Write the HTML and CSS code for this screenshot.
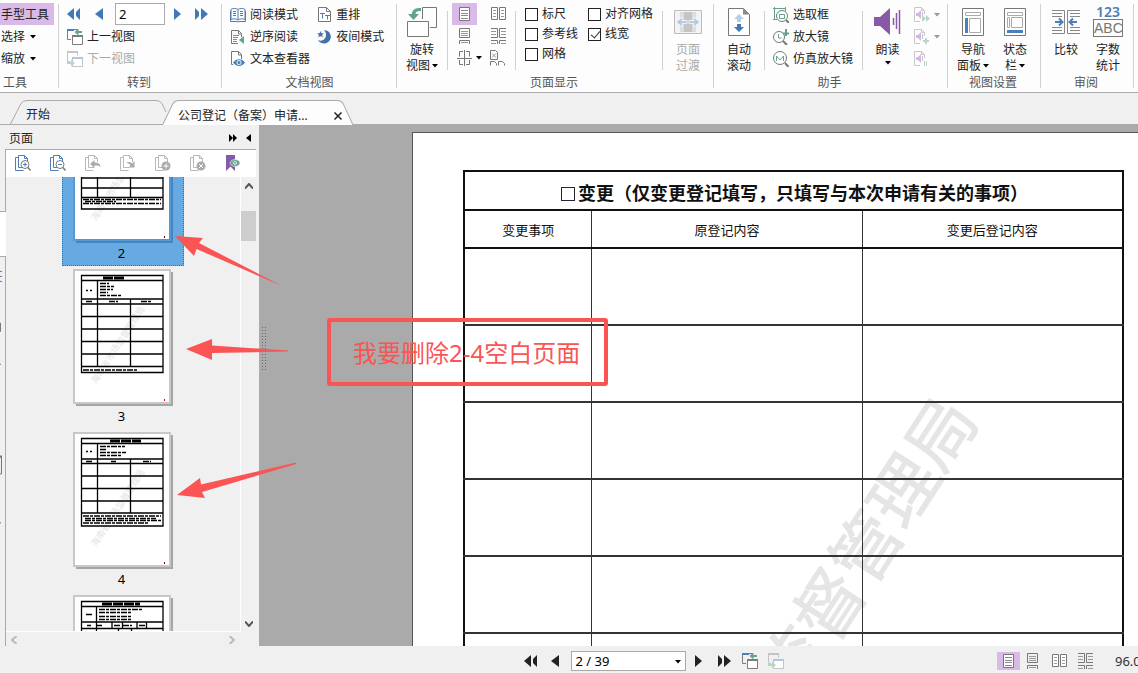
FILE: index.html
```html
<!DOCTYPE html>
<html lang="zh-CN">
<head>
<meta charset="utf-8">
<title>公司登记（备案）申请</title>
<link rel="stylesheet" href="styles.css">
</head>
<body>
<svg class="defs" aria-hidden="true">
  <symbol id="i-first" viewBox="0 0 14 12"><path d="M7 0v12L0 6zM9 4l4-4v12L9 8z" /></symbol>
  <symbol id="i-prev" viewBox="0 0 9 12"><path d="M8 0v12L0 6z" /></symbol>
  <symbol id="i-next" viewBox="0 0 9 12"><path d="M1 0v12l7-6z" /></symbol>
  <symbol id="i-last" viewBox="0 0 14 12"><path d="M1 0l4 4v4l-4 4zM7 0v12l7-6z" /></symbol>
  <symbol id="i-caret" viewBox="0 0 6 4"><path d="M0 0h6L3 3.500z" /></symbol>
  <symbol id="i-back" viewBox="0 0 16 16">
    <path d="M4 10.500H.5V.5h10M10.500 5V.5" fill="none" stroke="#7c7c7c"/><path d="M0 0h7v2H0z" fill="#4a7fb8"/>
    <path d="M5.500 6.500h10v9h-10z" fill="#fff" stroke="#7c7c7c"/><path d="M5 6h11v2H5z" fill="#7c7c7c"/>
    <path d="M7.500 3l4-3.500v2.500H15v2h-3.500v2.500z" fill="#62a389"/>
  </symbol>
  <symbol id="i-fwd" viewBox="0 0 16 16">
    <path d="M3 10.500H.5V.5h10v4" fill="none" stroke="#c4c4c4"/><path d="M0 0h11v2H0z" fill="#c4c4c4"/>
    <path d="M5.500 6.500h10v9h-10z" fill="#fff" stroke="#c4c4c4"/><path d="M5 6h11v2H5z" fill="#afc6de"/>
    <path d="M8 12l-4-3.500V11H0v2h4v2.500z" fill="#b5d5c8"/>
  </symbol>
  <symbol id="i-book" viewBox="0 0 16 16">
    <path d="M1 2.500C3 1 6 1 8 2.500C10 1 13 1 15 2.500V12.500C13 11.500 10 11.500 8 13C6 11.500 3 11.500 1 12.500zM8 2.500V13M.5 4v10.500h6.500l1 .5 1-.5h6.500V4" fill="none" stroke="#4a7fb8"/>
    <path d="M3 4.500h3M3 6.500h3M3 8.500h3M10 4.500h3M10 6.500h3M10 8.500h3" stroke="#777"/>
  </symbol>
  <symbol id="i-reverse" viewBox="0 0 16 16">
    <path d="M8 14.500H1.500V1.500h7l3 3V8M8.500 1.500v3.500h3" fill="none" stroke="#777"/>
    <path d="M3 6.500h6M3 8.500h5M3 10.500h4M3 12.500h4" stroke="#888"/><path d="M14 7v8l-5-4z" fill="#62a389"/>
  </symbol>
  <symbol id="i-viewer" viewBox="0 0 16 16">
    <path d="M3 13.500H1.500V.5h7l3 3V8M8.500.5v3.500h3" fill="none" stroke="#777"/>
    <path d="M3 11.500C6 7 12 7 15 11.500C12 16 6 16 3 11.500z" fill="#4a7fb8"/><circle cx="9" cy="11.500" r="2.500" fill="#dce8f4"/><circle cx="9" cy="11.500" r="1.500" fill="#4a7fb8"/>
  </symbol>
  <symbol id="i-reflow" viewBox="0 0 16 16">
    <path d="M1.500.5h8l4 4v10h-12zM9.500.5v4h4" fill="none" stroke="#777"/>
    <path d="M3 6.500h5M5.500 6.500v5M8 8.500h5M10.500 8.500v4" stroke="#4a7fb8" fill="none"/>
  </symbol>
  <symbol id="i-moon" viewBox="0 0 16 16">
    <path d="M7 1a6.800 6.800 0 1 1-6 10c4 2 8-1 8-5 0-2-.8-4-2-5z" fill="#4670a8"/><path d="M3.500 2l1 2.300 2.500.2-2 1.500.8 2.500L3.500 7l-2.300 1.500L2 6 0 4.500l2.500-.2z" fill="#4670a8"/>
  </symbol>
  <symbol id="i-single" viewBox="0 0 16 16"><path d="M2.500 1.500h10v13h-10z" fill="#fff" stroke="#777"/><path d="M4 4.500h7M4 7.500h7M4 9.500h7M4 12.500h7" stroke="#888"/></symbol>
  <symbol id="i-cont" viewBox="0 0 16 16"><path d="M2.500.5h10v9h-10zM2.500 16v-3.500h10V16" fill="none" stroke="#777"/><path d="M4 3.500h7M4 5.500h7M4 7.500h7M4 14.500h7" stroke="#999"/></symbol>
  <symbol id="i-facing" viewBox="0 0 16 16"><path d="M1.500 1.500h6v12h-6zM9.500 1.500h6v12h-6z" fill="#fff" stroke="#777"/><path d="M3 4.500h3M3 7.500h3M3 10.500h3M11 4.500h3M11 7.500h3M11 10.500h3" stroke="#999"/></symbol>
  <symbol id="i-contfacing" viewBox="0 0 16 16"><path d="M1 .5h6.500v9H1M16 .5H9.500v9H16M1 12.500h6.500V16M16 12.500H9.500V16" fill="none" stroke="#777"/><path d="M1 3.500h5M1 6.500h5M11 3.500h5M11 6.500h5M1 15.500h5M11 15.500h5" stroke="#999"/></symbol>
  <symbol id="i-split" viewBox="0 0 16 16"><path d="M6 1.500H2.500v5M2.500 10v4.500H6M9 1.500h3.500v5M12.500 10v4.500H9M7.500 0v16M0 8.500h15" fill="none" stroke="#777"/></symbol>
  <symbol id="i-cover" viewBox="0 0 16 16"><path d="M.5.500h5l2 2v7h-7zM.5 15.500v-4h4l2 2v2M8.500 15.500v-4h4l2 2v2" fill="none" stroke="#777"/><path d="M2 3.500l4 4M6 3.500l-4 4" stroke="#999"/></symbol>
  <symbol id="i-rotate" viewBox="0 0 30 30"><path d="M15.500 12V.5h14v20H23" fill="none" stroke="#777"/><path d="M.5 14.500h21v15H.5z" fill="#fff" stroke="#777"/><path d="M1 7h4C5 2 9 1 14 1v3c-3 0-5 0-5.500 3H12l-5.500 6z" fill="#62a389"/></symbol>
  <symbol id="i-trans" viewBox="0 0 28 24"><path d="M.5.500h27v23H.5z" fill="#f3f3f3" stroke="#bdbdbd"/><path d="M6 2h16v20H6z" fill="#ddd"/><path d="M10 2h8v20h-8z" fill="#c5c5c5"/><path d="M2 12l6-5v3.500h5v3H8V17zM26 12l-6-5v3.500h-5v3h5V17z" fill="#b3cbe6" stroke="#fff" stroke-width=".7"/></symbol>
  <symbol id="i-scroll" viewBox="0 0 22 28"><path d="M.5.500h15l6 6v21H.5z" fill="#fff" stroke="#777"/><path d="M15 .5v6h6.500" fill="#888"/><path d="M11 6l5 5h-3v3H9v-3H6z" fill="#b5cee8"/><path d="M11 24l5-5h-3v-3H9v3H6z" fill="#4078b8"/></symbol>
  <symbol id="i-marquee" viewBox="0 0 16 16"><path d="M0 1.500h12M12.500 0v4M1.500 0v12M0 12.500h4" stroke="#62a389" fill="none"/><circle cx="9" cy="9" r="5.500" fill="#fff" stroke="#777"/><path d="M6.500 11.500v-4h5v4z" fill="none" stroke="#62a389"/><path d="M13 13l3 3" stroke="#777" stroke-width="2"/></symbol>
  <symbol id="i-loupe" viewBox="0 0 16 16"><circle cx="6" cy="8" r="5.500" fill="#fff" stroke="#777"/><path d="M5.500 5v4h3" stroke="#62a389" fill="none"/><path d="M10 12l4 4" stroke="#777" stroke-width="2"/><path d="M13 0v7M10 4.500h6" stroke="#62a389" stroke-width="2"/></symbol>
  <symbol id="i-magnify" viewBox="0 0 16 16"><circle cx="7" cy="7" r="6.500" fill="#fff" stroke="#777"/><path d="M3.500 10V5l3.500 4 3.500-4v5" stroke="#62a389" fill="none"/><path d="M12 12l3.500 4" stroke="#777" stroke-width="2"/></symbol>
  <symbol id="i-read" viewBox="0 0 27 28"><path d="M0 9h6l10-9v27L6 18H0z" fill="#8859a7"/><path d="M19.500 10v7M22.500 5v16M25.500 2v24" stroke="#8859a7" stroke-width="1.500"/></symbol>
  <symbol id="i-vol" viewBox="0 0 16 16"><path d="M6 14.500H.5V.5h7l3 3V7M7.500.5v3h3" fill="none" stroke="#c8c8c8"/><path d="M2 6h2l3-3v9L4 9H2z" fill="#d0b9de"/><path d="M8.500 5v5" stroke="#d0b9de"/></symbol>
  <symbol id="i-nav" viewBox="0 0 22 28"><path d="M.5.500h21v27H.5z" fill="#fff" stroke="#777"/><path d="M3.500 4.500h15v3h-15zM7.500 10.500h11v14h-11z" fill="none" stroke="#aaa"/><path d="M3 10h3v15H3z" fill="#4a7fb8"/></symbol>
  <symbol id="i-statusbar" viewBox="0 0 22 28"><path d="M.5.500h21v27H.5z" fill="#fff" stroke="#777"/><path d="M3.500 4.500h15v3h-15zM3.500 9.500h2v10h-2zM7.500 9.500h11v10h-11z" fill="none" stroke="#aaa"/><path d="M3 22h16v3H3z" fill="#4a7fb8"/></symbol>
  <symbol id="i-compare" viewBox="0 0 28 28"><path d="M0 2.500h12.500v23H0M28 2.500H15.500v23H28M0 5.500h10M0 8.500h10M0 19.500h10M0 22.500h10M18 5.500h10M18 8.500h10M18 19.500h10M18 22.500h10" fill="none" stroke="#888"/><path d="M3 14h7M7 10.500l3.500 3.500L7 17.500M25 14h-7M21 10.500L17.500 14l3.500 3.500" fill="none" stroke="#4a7fb8" stroke-width="2"/></symbol>
  <symbol id="i-pages" viewBox="0 0 16 16"><path d="M3.500 2.500h-3v13h8M9 12.500H3.500V.5h6l3 3V7M9.500.5v3h3" fill="none" stroke="currentColor"/></symbol>
  <symbol id="i-zoomin" viewBox="0 0 16 16"><use href="#i-pages" color="#4a7fb8"/><circle cx="10" cy="9.500" r="4" fill="#fff" stroke="#777"/><path d="M8 9.500h4M10 7.500v4" stroke="#4a7fb8"/><path d="M13 12.500l2.500 3" stroke="#777" stroke-width="1.500"/></symbol>
  <symbol id="i-zoomout" viewBox="0 0 16 16"><use href="#i-pages" color="#4a7fb8"/><circle cx="10" cy="9.500" r="4" fill="#fff" stroke="#777"/><path d="M8 9.500h4" stroke="#4a7fb8"/><path d="M13 12.500l2.500 3" stroke="#777" stroke-width="1.500"/></symbol>
  <symbol id="i-rotl" viewBox="0 0 16 16"><use href="#i-pages" color="#b8b8b8"/><path d="M5 9l4.500-4v2.500c3.500 0 6 1 6 5-1-2-3-2-6-2V13z" fill="#aaa"/></symbol>
  <symbol id="i-rotr" viewBox="0 0 16 16"><use href="#i-pages" color="#b8b8b8"/><path d="M6 7.500c3-1 5-.5 6 1L14.500 6v6.500H8l2.500-2c-1-2-3-2.500-4.500-3z" fill="#aaa"/></symbol>
  <symbol id="i-padd" viewBox="0 0 16 16"><use href="#i-pages" color="#b8b8b8"/><circle cx="11" cy="11" r="4.500" fill="#aaa"/><path d="M8.500 11h5M11 8.500v5" stroke="#fff"/></symbol>
  <symbol id="i-pdel" viewBox="0 0 16 16"><use href="#i-pages" color="#b8b8b8"/><circle cx="11" cy="11" r="4.500" fill="#aaa"/><path d="M9 9l4 4M13 9l-4 4" stroke="#fff"/></symbol>
  <symbol id="i-mark" viewBox="0 0 16 16"><path d="M1 0h9v16l-4.500-4.500L1 16z" fill="#8859a7"/><ellipse cx="10" cy="8" rx="5" ry="3.500" fill="#72a690" stroke="#fff" stroke-width=".5"/><circle cx="10" cy="8" r="1.500" fill="none" stroke="#d8eae2"/></symbol>
  <symbol id="i-more" viewBox="0 0 8 8"><path d="M0 0l4 4-4 4zM4 0l4 4-4 4z"/></symbol>
  <symbol id="i-up" viewBox="0 0 8 6"><path d="M0 5.500L4 1l4 4.500" fill="none" stroke="currentColor" stroke-width="2"/></symbol>
</svg>

<header class="ribbon">
  <section class="group group-tools">
    <div class="group-body"><div class="stack">
      <button class="cmd on">手型工具</button>
      <button class="cmd">选择<svg class="caret"><use href="#i-caret"/></svg></button>
      <button class="cmd">缩放<svg class="caret"><use href="#i-caret"/></svg></button>
    </div></div>
    <h2>工具</h2>
  </section>
  <section class="group group-goto">
    <div class="group-body"><div class="stack">
      <div class="nav-row">
        <button class="nav" aria-label="首页"><svg class="w14"><use href="#i-first"/></svg></button>
        <button class="nav" aria-label="上一页"><svg class="w9"><use href="#i-prev"/></svg></button>
        <input class="page-input" type="text" value="2" aria-label="页码">
        <button class="nav" aria-label="下一页"><svg class="w9"><use href="#i-next"/></svg></button>
        <button class="nav" aria-label="末页"><svg class="w14"><use href="#i-last"/></svg></button>
      </div>
      <button class="cmd"><svg class="ic"><use href="#i-back"/></svg>上一视图</button>
      <button class="cmd off" disabled><svg class="ic"><use href="#i-fwd"/></svg>下一视图</button>
    </div></div>
    <h2>转到</h2>
  </section>
  <section class="group group-doc">
    <div class="group-body">
      <div class="stack">
        <button class="cmd"><svg class="ic"><use href="#i-book"/></svg>阅读模式</button>
        <button class="cmd"><svg class="ic"><use href="#i-reverse"/></svg>逆序阅读</button>
        <button class="cmd"><svg class="ic"><use href="#i-viewer"/></svg>文本查看器</button>
      </div>
      <div class="stack">
        <button class="cmd"><svg class="ic"><use href="#i-reflow"/></svg>重排</button>
        <button class="cmd"><svg class="ic"><use href="#i-moon"/></svg>夜间模式</button>
      </div>
    </div>
    <h2>文档视图</h2>
  </section>
  <section class="group group-display">
    <div class="group-body">
      <button class="big"><svg class="s30"><use href="#i-rotate"/></svg><span>旋转</span><span>视图<svg class="caret"><use href="#i-caret"/></svg></span></button>
      <div class="layouts">
        <button class="lay on" aria-label="单页"><svg class="ic"><use href="#i-single"/></svg></button>
        <button class="lay" aria-label="双页"><svg class="ic"><use href="#i-facing"/></svg></button>
        <button class="lay" aria-label="连续"><svg class="ic"><use href="#i-cont"/></svg></button>
        <button class="lay" aria-label="连续双页"><svg class="ic"><use href="#i-contfacing"/></svg></button>
        <button class="lay lay-drop" aria-label="拆分"><svg class="ic"><use href="#i-split"/></svg><svg class="caret"><use href="#i-caret"/></svg></button>
        <button class="lay" aria-label="封面"><svg class="ic"><use href="#i-cover"/></svg></button>
      </div>
      <div class="checks">
        <label><input type="checkbox">标尺</label>
        <label><input type="checkbox">对齐网格</label>
        <label><input type="checkbox">参考线</label>
        <label><input type="checkbox" checked>线宽</label>
        <label><input type="checkbox">网格</label>
      </div>
      <button class="big off" disabled><svg class="s28x24"><use href="#i-trans"/></svg><span>页面</span><span>过渡</span></button>
    </div>
    <h2>页面显示</h2>
  </section>
  <section class="group group-assist">
    <div class="group-body">
      <button class="big"><svg class="s22"><use href="#i-scroll"/></svg><span>自动</span><span>滚动</span></button>
      <div class="stack ruled">
        <button class="cmd"><svg class="ic"><use href="#i-marquee"/></svg>选取框</button>
        <button class="cmd"><svg class="ic"><use href="#i-loupe"/></svg>放大镜</button>
        <button class="cmd"><svg class="ic"><use href="#i-magnify"/></svg>仿真放大镜</button>
      </div>
      <button class="big"><svg class="s27"><use href="#i-read"/></svg><span>朗读</span><svg class="caret low"><use href="#i-caret"/></svg></button>
      <div class="stack">
        <button class="cmd off" disabled aria-label="朗读快进"><svg class="ic" viewBox="0 0 16 16"><use href="#i-vol"/><path d="M8 8l4 3.500L8 15zM12 8l4 3.500-4 3.500z" fill="#b5d8c8"/></svg><svg class="caret"><use href="#i-caret"/></svg></button>
        <button class="cmd off" disabled aria-label="朗读增大"><svg class="ic" viewBox="0 0 16 16"><use href="#i-vol"/><path d="M12 9v6M9 12h6" stroke="#b5d8c8" stroke-width="2"/></svg><svg class="caret"><use href="#i-caret"/></svg></button>
        <button class="cmd off" disabled aria-label="朗读暂停"><svg class="ic" viewBox="0 0 16 16"><use href="#i-vol"/><path d="M10.500 10v5M12.500 10v5" stroke="#b5d8c8"/></svg></button>
      </div>
    </div>
    <h2>助手</h2>
  </section>
  <section class="group group-pair">
    <div class="group-body">
      <button class="big"><svg class="s22"><use href="#i-nav"/></svg><span>导航</span><span>面板<svg class="caret"><use href="#i-caret"/></svg></span></button>
      <button class="big"><svg class="s22"><use href="#i-statusbar"/></svg><span>状态</span><span>栏<svg class="caret"><use href="#i-caret"/></svg></span></button>
    </div>
    <h2>视图设置</h2>
  </section>
  <section class="group group-pair">
    <div class="group-body">
      <button class="big"><svg class="s28"><use href="#i-compare"/></svg><span>比较</span></button>
      <button class="big"><span class="count"><b>123</b><i>ABC</i></span><span>字数</span><span>统计</span></button>
    </div>
    <h2>审阅</h2>
  </section>
</header>

<nav class="tabs">
  <a class="tab tab-home" href="#"><svg class="tab-shape" viewBox="0 0 158 24" preserveAspectRatio="none"><path d="M.5 24L11 3.500Q13 .5 17 .5H146Q150 .5 152 3.500L156 12" fill="#f0f0f0" stroke="#aaa"/></svg><span>开始</span></a>
  <a class="tab tab-doc" href="#"><svg class="tab-shape" viewBox="0 0 194 24" preserveAspectRatio="none"><path d="M.5 24L11 3.500Q13 .5 17 .5H177Q181 .5 183 3.500L193 24" fill="#fdfdfd" stroke="#aaa"/></svg><span>公司登记（备案）申请...</span><svg class="close" viewBox="0 0 8 8"><path d="M.5.500l7 7M7.500.500l-7 7" stroke="#222" stroke-width="1.500"/></svg></a>
</nav>

<main class="work">
  <aside class="side">
    <div class="side-head"><h2>页面</h2>
      <button aria-label="展开"><svg class="s8"><use href="#i-more"/></svg></button>
      <button aria-label="折叠"><svg class="s8" viewBox="0 0 8 8"><path d="M6 0v8L1 4z"/></svg></button>
    </div>
    <div class="side-main">
      <div class="strip"><i class="seg a"></i><i class="seg b"></i><svg class="seg c" viewBox="0 0 6 390" preserveAspectRatio="xMinYMin slice"><path d="M0 14.500h2M0 19.500h2M0 24.500h2M0 107.500h1" stroke="#4a7fb8" fill="none"/><path d="M.5 66v9" stroke="#777"/><path d="M0 199h2v2H0z" fill="#4a7fb8"/><path d="M0 200.500h1.500v17H0" fill="none" stroke="#777"/><path d="M0 266.500h1" stroke="#8859a7"/></svg></div>
      <div class="pane">
        <div class="tools">
          <button aria-label="放大"><svg class="ic"><use href="#i-zoomin"/></svg></button>
          <button aria-label="缩小"><svg class="ic"><use href="#i-zoomout"/></svg></button>
          <button aria-label="左转"><svg class="ic"><use href="#i-rotl"/></svg></button>
          <button aria-label="右转"><svg class="ic"><use href="#i-rotr"/></svg></button>
          <button aria-label="插入"><svg class="ic"><use href="#i-padd"/></svg></button>
          <button aria-label="删除"><svg class="ic"><use href="#i-pdel"/></svg></button>
          <button aria-label="书签"><svg class="ic"><use href="#i-mark"/></svg></button>
        </div>
        <div class="thumbs-area">
          <div class="thumbs">
            <figure class="thumb sel">
              <svg viewBox="0 0 100 137"><path class="sh" d="M3 3h97v134H3z"/><path class="pg" d="M1 1h96v133H1z"/>
                <text class="wm" text-anchor="end" transform="translate(72 40) rotate(-57)">海南省市场监督管理局</text>
                <path class="ln" d="M8.500 6h81.500v97H8.500zM8.500 72H90M8.500 82H90M8.500 91.500H90M24.500 10V91M57.500 10V91"/>
                <path class="tx" d="M10 93.500H88M12 95.500H43M10 97.500H88"/><path d="M91 131h1" stroke="#800" stroke-width="2"/></svg>
              <figcaption>2</figcaption>
            </figure>
            <figure class="thumb">
              <svg viewBox="0 0 100 137"><path class="sh" d="M3 3h97v134H3z"/><path class="pg" d="M1 1h96v133H1z"/>
                <text class="wm" text-anchor="end" transform="translate(72 40) rotate(-57)">海南省市场监督管理局</text>
                <path class="ln" d="M8.500 6.500h81.500v97H8.500zM8.500 11.500H90M8.500 30H90M8.500 35H90M8.500 47.500H90M8.500 60H90M8.500 72.500H90M8.500 85H90M8.500 97.500H90M24.500 11V97M57.500 30V97"/>
                <path class="hd" d="M30 9H52"/><path class="tx" d="M13 21.500h2M17 21.500h2M27 14.500h9M27 17.500h14M27 20.500h13M27 23.500h8M27 26.500h21M13 32.500h7M36 32.500h9M68 32.500h11M10 101H65"/><path d="M91 131h1" stroke="#c00" stroke-width="2"/></svg>
              <figcaption>3</figcaption>
            </figure>
            <figure class="thumb">
              <svg viewBox="0 0 100 137"><path class="sh" d="M3 3h97v134H3z"/><path class="pg" d="M1 1h96v133H1z"/>
                <text class="wm" text-anchor="end" transform="translate(72 40) rotate(-57)">海南省市场监督管理局</text>
                <path class="ln" d="M8.500 6.500h81.500v87.500H8.500zM8.500 11.500H90M8.500 27H90M8.500 31.500H90M8.500 44H90M8.500 56.500H90M8.500 69H90M8.500 81H90M24.500 11V81M57.500 27V81"/>
                <path class="hd" d="M37 9H68"/><path class="tx" d="M13 19.500h2M17 19.500h2M27 14.500h25M27 17.500h7M27 20.500h26M27 23.500h21M13 29.500h7M38 29.500h5M70 29.500h8M10 84H88M12 86.500H83M12 88.500H88M10 91H76"/><path d="M91 131h1" stroke="#800" stroke-width="2"/></svg>
              <figcaption>4</figcaption>
            </figure>
            <figure class="thumb">
              <svg viewBox="0 0 100 137"><path class="sh" d="M3 3h97v134H3z"/><path class="pg" d="M1 1h96v133H1z"/>
                <path class="ln" d="M8.500 6.500h81.500v120H8.500zM8.500 11.500H90M8.500 27H90M8.500 33.500H90M23.500 11V60M39 27v6M49.500 27v6M64 27v6M73.500 27v6M45.500 33v30M58.500 33v30"/>
                <path class="hd" d="M29 9H67"/><path class="tx" d="M13 19.500h6M26 14.500h44M26 17.500h33M26 21.500h33M26 24.500h33M14 30.500h4M24 30.500h5M41 30.500h6M50 30.500h9M66 30.500h6"/></svg>
            </figure>
          </div>
          <div class="vbar"><svg class="arr"><use href="#i-up"/></svg><i class="knob"></i><svg class="arr down"><use href="#i-up"/></svg></div>
        </div>
        <div class="hbar"><svg class="arr left"><use href="#i-up"/></svg><svg class="arr right"><use href="#i-up"/></svg></div>
      </div>
    </div>
  </aside>

  <section class="viewer">
    <i class="grip"></i>
    <article class="page">
      <svg class="watermark"><text text-anchor="end" transform="translate(546 272) rotate(-57)" dy="25">督管理局</text><text text-anchor="end" transform="translate(398 500) rotate(-57)" dy="25">监</text></svg>
      <table class="form">
        <colgroup><col class="c1"><col class="c2"><col class="c3"></colgroup>
        <thead>
          <tr class="title"><th colspan="3"><span class="box"></span>变更（仅变更登记填写，只填写与本次申请有关的事项）</th></tr>
          <tr class="heads"><th>变更事项</th><th>原登记内容</th><th>变更后登记内容</th></tr>
        </thead>
        <tbody>
          <tr><td></td><td></td><td></td></tr><tr><td></td><td></td><td></td></tr><tr><td></td><td></td><td></td></tr>
          <tr><td></td><td></td><td></td></tr><tr><td></td><td></td><td></td></tr><tr><td></td><td></td><td></td></tr>
        </tbody>
      </table>
    </article>
  </section>

  <svg class="arrows" viewBox="0 125 300 400" width="300" height="400">
    <path d="M175 236L203 238 199 243 282 286 196.500 249 194 256z"/>
    <path d="M186 349L212 339V345.500L288 350.500V351.500L212 353V360z"/>
    <path d="M177 495L200 478 201 484.500 296 462.500V464L202 492 205 498z"/>
  </svg>
  <p class="note">我要删除2-4空白页面</p>
</main>

<footer class="status">
  <div class="pager">
    <button class="nav" aria-label="首页"><svg class="w14"><use href="#i-first"/></svg></button>
    <button class="nav" aria-label="上一页"><svg class="w9"><use href="#i-prev"/></svg></button>
    <span class="picker"><select aria-label="页码"><option>2 / 39</option></select><svg class="caret"><use href="#i-caret"/></svg></span>
    <button class="nav" aria-label="下一页"><svg class="w9"><use href="#i-next"/></svg></button>
    <button class="nav" aria-label="末页"><svg class="w14"><use href="#i-last"/></svg></button>
    <button class="nav" aria-label="上一视图"><svg class="ic"><use href="#i-back"/></svg></button>
    <button class="nav" aria-label="下一视图"><svg class="ic"><use href="#i-fwd"/></svg></button>
  </div>
  <div class="modes">
    <button class="mode on" aria-label="单页"><svg class="ic"><use href="#i-single"/></svg></button>
    <button class="mode" aria-label="连续"><svg class="ic"><use href="#i-cont"/></svg></button>
    <button class="mode" aria-label="双页"><svg class="ic"><use href="#i-facing"/></svg></button>
    <button class="mode" aria-label="连续双页"><svg class="ic"><use href="#i-contfacing"/></svg></button>
    <span class="zoom">96.02%</span>
  </div>
</footer>
</body>
</html>
```
FILE: styles.css
```css
* { box-sizing: border-box; }
body {
  margin: 0; height: 100vh; overflow: hidden; display: flex; flex-direction: column;
  background: #f0f0f0; color: #222;
  font: 12px/16px "Noto Sans", "Noto Sans CJK SC", sans-serif;
}
.defs { position: absolute; width: 0; height: 0; }
button { border: 0; padding: 0; margin: 0; background: none; font: inherit; color: inherit; }
h2 { margin: 0; font-size: 12px; font-weight: 400; }
svg { flex: none; display: block; overflow: visible; }
.ic { width: 16px; height: 16px; }
.w14 { width: 14px; height: 12px; }
.w9 { width: 9px; height: 12px; }
.s30 { width: 30px; height: 30px; }
.s28 { width: 28px; height: 28px; }
.s28x24 { width: 28px; height: 24px; }
.s27 { width: 27px; height: 28px; }
.s22 { width: 22px; height: 28px; }
.s8 { width: 8px; height: 8px; }
.caret { width: 6px; height: 4px; }
.on { background: #d8b9e8; }

/* ribbon */
.ribbon { flex: none; display: flex; height: 93px; background: #fdfdfd; border-bottom: 1px solid #aaa; overflow: hidden; }
.group { flex: none; display: flex; flex-direction: column; position: relative; }
.group::after { content: ""; position: absolute; right: 0; top: 4px; bottom: 4px; width: 1px; background: #d0d0d0; }
.group h2 { height: 16px; text-align: center; color: #555; padding-right: 3px; }
.group-body { height: 75px; display: flex; padding-top: 3px; }
.group-tools { width: 59px; }
.group-tools h2 { text-align: left; padding-left: 3px; }
.group-goto { width: 163px; }
.group-doc { width: 175px; }
.group-doc h2 { padding-right: 0; }
.group-display { width: 317px; }
.group-assist { width: 234px; }
.group-pair { width: 93px; }
.stack { display: flex; flex-direction: column; }
.cmd { display: flex; align-items: center; gap: 4px; height: 22px; padding-top: 2px; white-space: nowrap; }
.off { color: #aaa; }
.group-tools .cmd { width: 54px; padding-left: 1px; gap: 5px; }
.group-goto .stack { padding-left: 8px; }
.nav-row { display: flex; align-items: center; height: 22px; fill: #4078b8; }
.group-goto .nav { width: 24px; display: flex; }
.group-goto .nav:first-child { width: 28px; }
.group-goto .nav:nth-child(2) { width: 20px; }
.group-goto .page-input ~ .nav { justify-content: center; }
.page-input { width: 50px; height: 22px; margin: 0; border: 1px solid #aaa; padding: 0 3px; font: 13px "Noto Sans", sans-serif; background: #fff; color: #000; }
.group-doc .group-body { padding-left: 8px; }
.group-doc .stack { width: 90px; }
.group-doc .stack + .stack { padding-left: 4px; }
.group-doc .stack + .stack .cmd { gap: 3px; }
.big { width: 50px; display: flex; flex-direction: column; align-items: center; }
.big > span { display: flex; align-items: center; gap: 2px; height: 16px; white-space: nowrap; }
.big > svg:first-child { margin: 5px 0 6px; }
.big > .s30:first-child { margin: 4px 0 5px; }
.big > .s28x24:first-child { margin: 7px 0 8px; }
.low { margin-top: 3px; }
.layouts { display: grid; grid-template-columns: 33px 33px; grid-auto-rows: 22px; width: 69px; height: 66px; position: relative; padding-left: 5px; }
.layouts::before, .layouts::after, .checks::after, .ruled::before, .ruled::after { content: ""; position: absolute; top: 8px; height: 59px; width: 1px; background: #d0d0d0; }
.layouts::before, .ruled::before { left: 0; }
.layouts::after, .checks::after, .ruled::after { right: 0; }
.lay { width: 25px; height: 22px; display: flex; align-items: center; justify-content: center; }
.lay-drop { width: 30px; justify-content: flex-end; gap: 3px; }
.checks { position: relative; display: grid; grid-template-columns: 63px 75px; grid-auto-rows: 20px; width: 147px; padding-left: 9px; padding-top: 1px; }
.checks label { display: flex; align-items: center; gap: 4px; white-space: nowrap; }
.checks input { appearance: none; width: 13px; height: 13px; margin: 0; border: 1px solid #222; background: #fff; position: relative; }
.checks input:checked::after { content: ""; position: absolute; left: 4px; top: 0; width: 4px; height: 8px; border: solid #333; border-width: 0 1px 1px 0; transform: rotate(40deg); }
.ruled { position: relative; width: 99px; padding-left: 9px; }
.group-assist .ruled + .big { width: 49px; }
.group-assist .stack:last-child { padding-left: 2px; }
.group-assist .stack:last-child .cmd { gap: 4px; fill: #999; }
.group-pair .group-body { padding-left: 4px; }
.group-pair .big { width: 42px; }
.big > .count { height: 39px; flex-direction: column; gap: 0; justify-content: flex-end; padding-bottom: 5px; }
.count b { font: 600 14px/14px "Noto Sans", sans-serif; color: #4a7fb8; }
.count i { font: 14px/16px "Liberation Sans", sans-serif; color: #777; border: 1px solid #777; width: 30px; height: 18px; text-align: center; }

/* tabs */
.tabs { flex: none; height: 32px; display: flex; align-items: flex-end; padding-left: 10px; border-bottom: 1px solid #aaa; }
.tab { position: relative; display: flex; align-items: center; height: 24px; padding: 6px 16px 0; color: #222; text-decoration: none; }
.tab span { position: relative; }
.tab-home { width: 152px; }
.tab-doc { width: 192px; justify-content: space-between; padding-right: 12px; height: 25px; margin-bottom: -1px; }
.tab-shape { position: absolute; left: 0; top: 0; width: 100%; height: 100%; }
.tab-home .tab-shape { width: 158px; }
.close { position: relative; width: 8px; height: 8px; }

/* work area */
.work { flex: 1; min-height: 0; display: flex; position: relative; overflow: hidden; }
.side { width: 259px; flex: none; display: flex; flex-direction: column; }
.side-head { height: 24px; display: flex; align-items: center; gap: 8px; padding: 2px 6px 0 9px; flex: none; }
.side-head h2 { flex: 1; padding-top: 2px; }
.side-main { flex: 1; min-height: 0; display: flex; }
.strip { width: 6px; flex: none; display: flex; flex-direction: column; }
.seg { display: block; width: 6px; }
.seg.a { height: 63px; border-right: 1px solid #aaa; border-bottom: 1px solid #aaa; }
.seg.b { height: 45px; background: #fff; border-bottom: 1px solid #aaa; }
.seg.c { flex: 1; min-height: 0; border-right: 1px solid #aaa; overflow: hidden; }
.pane { width: 250px; display: flex; flex-direction: column; }
.tools { height: 28px; flex: none; border-top: 1px solid #aaa; background: #fff; display: flex; align-items: center; gap: 19px; padding: 0 0 2px 9px; }
.thumbs-area { flex: 1; min-height: 0; display: flex; }
.thumbs { flex: 1; overflow: hidden; display: flex; flex-direction: column; align-items: center; border-bottom: 1px solid #fff; }
.thumb { flex: none; margin: 0; width: 122px; height: 163px; padding-top: 3px; }
.thumb:first-child { margin-top: -74px; }
.thumb > svg { width: 100px; height: 137px; margin-left: 11px; }
.thumb.sel { background: #67aae1; border: 1px dotted #a05a20; padding-top: 2px; }
.thumb.sel > svg { margin-left: 10px; }
.thumb figcaption { text-align: center; color: #000; font-size: 13px; line-height: 20px; padding-right: 3px; }
.sh { fill: #a6a6a6; }
.pg { fill: #fff; stroke: #c8c8c8; stroke-width: 2; }
.sel .sh { fill: #4586c0; }
.sel .pg { stroke: #5499d4; }
.ln { fill: none; stroke: #000; stroke-width: 1.3; }
.hd { stroke: #000; stroke-width: 3; stroke-dasharray: 10 1; }
.tx { stroke: #000; stroke-width: 1.6; stroke-dasharray: 6 1 3 1; }
.wm { font-size: 9px; fill: #e4e4e4; }
.vbar { width: 16px; display: flex; flex-direction: column; align-items: center; border-left: 1px solid #fff; color: #555; padding: 6px 0 5px; }
.knob { width: 15px; height: 30px; background: #cdcdcd; margin: 22px 0 auto; }
.arr { width: 8px; height: 6px; }
.down { transform: rotate(180deg); }
.left { transform: rotate(-90deg); }
.right { transform: rotate(90deg); }
.hbar { height: 14px; flex: none; display: flex; justify-content: space-between; align-items: center; padding: 2px 20px 0 4px; color: #bbb; }

/* document viewer */
.viewer { flex: 1; min-width: 0; background: #aaa; position: relative; overflow: hidden; padding: 7px 0 0 153px; }
.grip { position: absolute; left: 3px; top: 202px; width: 4px; height: 44px; background: repeating-linear-gradient(#666 0 1px, transparent 1px 3px); }
.grip::after { content: ""; position: absolute; left: 1px; top: 0; width: 2px; height: 44px; background: #aaa; }
.page { position: relative; background: #fff; border: 1px solid #555; border-width: 1px 0 0 1px; padding: 37px 14px 100px 50px; }
.watermark { position: absolute; left: 0; top: 0; width: 100%; height: 100%; font: 68px "Noto Sans CJK SC", sans-serif; fill: #e5e5e5; stroke: #e5e5e5; stroke-width: 1px; }
.form { position: relative; width: 100%; border-collapse: collapse; table-layout: fixed; border: 2px solid #111; color: #111; font: 13px/18px "Noto Sans CJK SC", sans-serif; }
.c1 { width: 19.4%; }
.c2 { width: 41%; }
.form th, .form td { padding: 0; border: 1px solid #333; border-bottom-width: 2px; }
.form th { font-weight: 400; border-bottom: 2px solid #111; padding-top: 2px; }
.form .title th { height: 39px; font-size: 18px; font-weight: 700; padding-left: 2px; }
.heads th { height: 38px; }
.form td { height: 77px; }
.form tbody tr:nth-child(-n+3) td { height: 77px; }
.box { display: inline-block; width: 14px; height: 14px; border: 1px solid #223; margin-right: 3px; vertical-align: -1px; }

/* mark-up over the document */
.arrows { position: absolute; left: 0; top: 0; fill: #fb5454; }
.note { position: absolute; left: 327px; top: 193px; margin: 0; padding: 13px 24px 11px 22px; border: 4px solid #fb5454; border-radius: 3px; color: #fb5454; font: 24px/36px "Noto Sans", "Noto Sans CJK SC", sans-serif; white-space: nowrap; }

/* status bar */
.status { flex: none; height: 27px; display: flex; justify-content: space-between; padding: 4px 0 0 46%; overflow: hidden; }
.pager { display: flex; align-items: center; height: 22px; }
.pager .nav { width: 26px; display: flex; justify-content: center; fill: #222; padding-right: 4px; }
.pager .nav:first-child { width: 22px; padding-right: 0; margin-left: -3px; }
.pager .nav:nth-child(2) { width: 29px; padding-right: 2px; }
.picker { position: relative; width: 115px; height: 20px; margin-right: 1px; }
.picker select { appearance: none; width: 100%; height: 100%; border: 1px solid #aaa; background: #fff; font: 13px "Noto Sans", sans-serif; color: #000; padding: 0 3px; margin: 0; border-radius: 0; }
.picker .caret { position: absolute; right: 5px; top: 9px; }
.modes { display: flex; align-items: center; width: 141px; height: 22px; overflow: hidden; }
.mode { flex: none; width: 26px; height: 18px; display: flex; justify-content: center; align-items: center; }
.mode.on { width: 23px; }
.zoom { flex: none; padding-left: 17px; font-size: 13px; color: #333; }
```
